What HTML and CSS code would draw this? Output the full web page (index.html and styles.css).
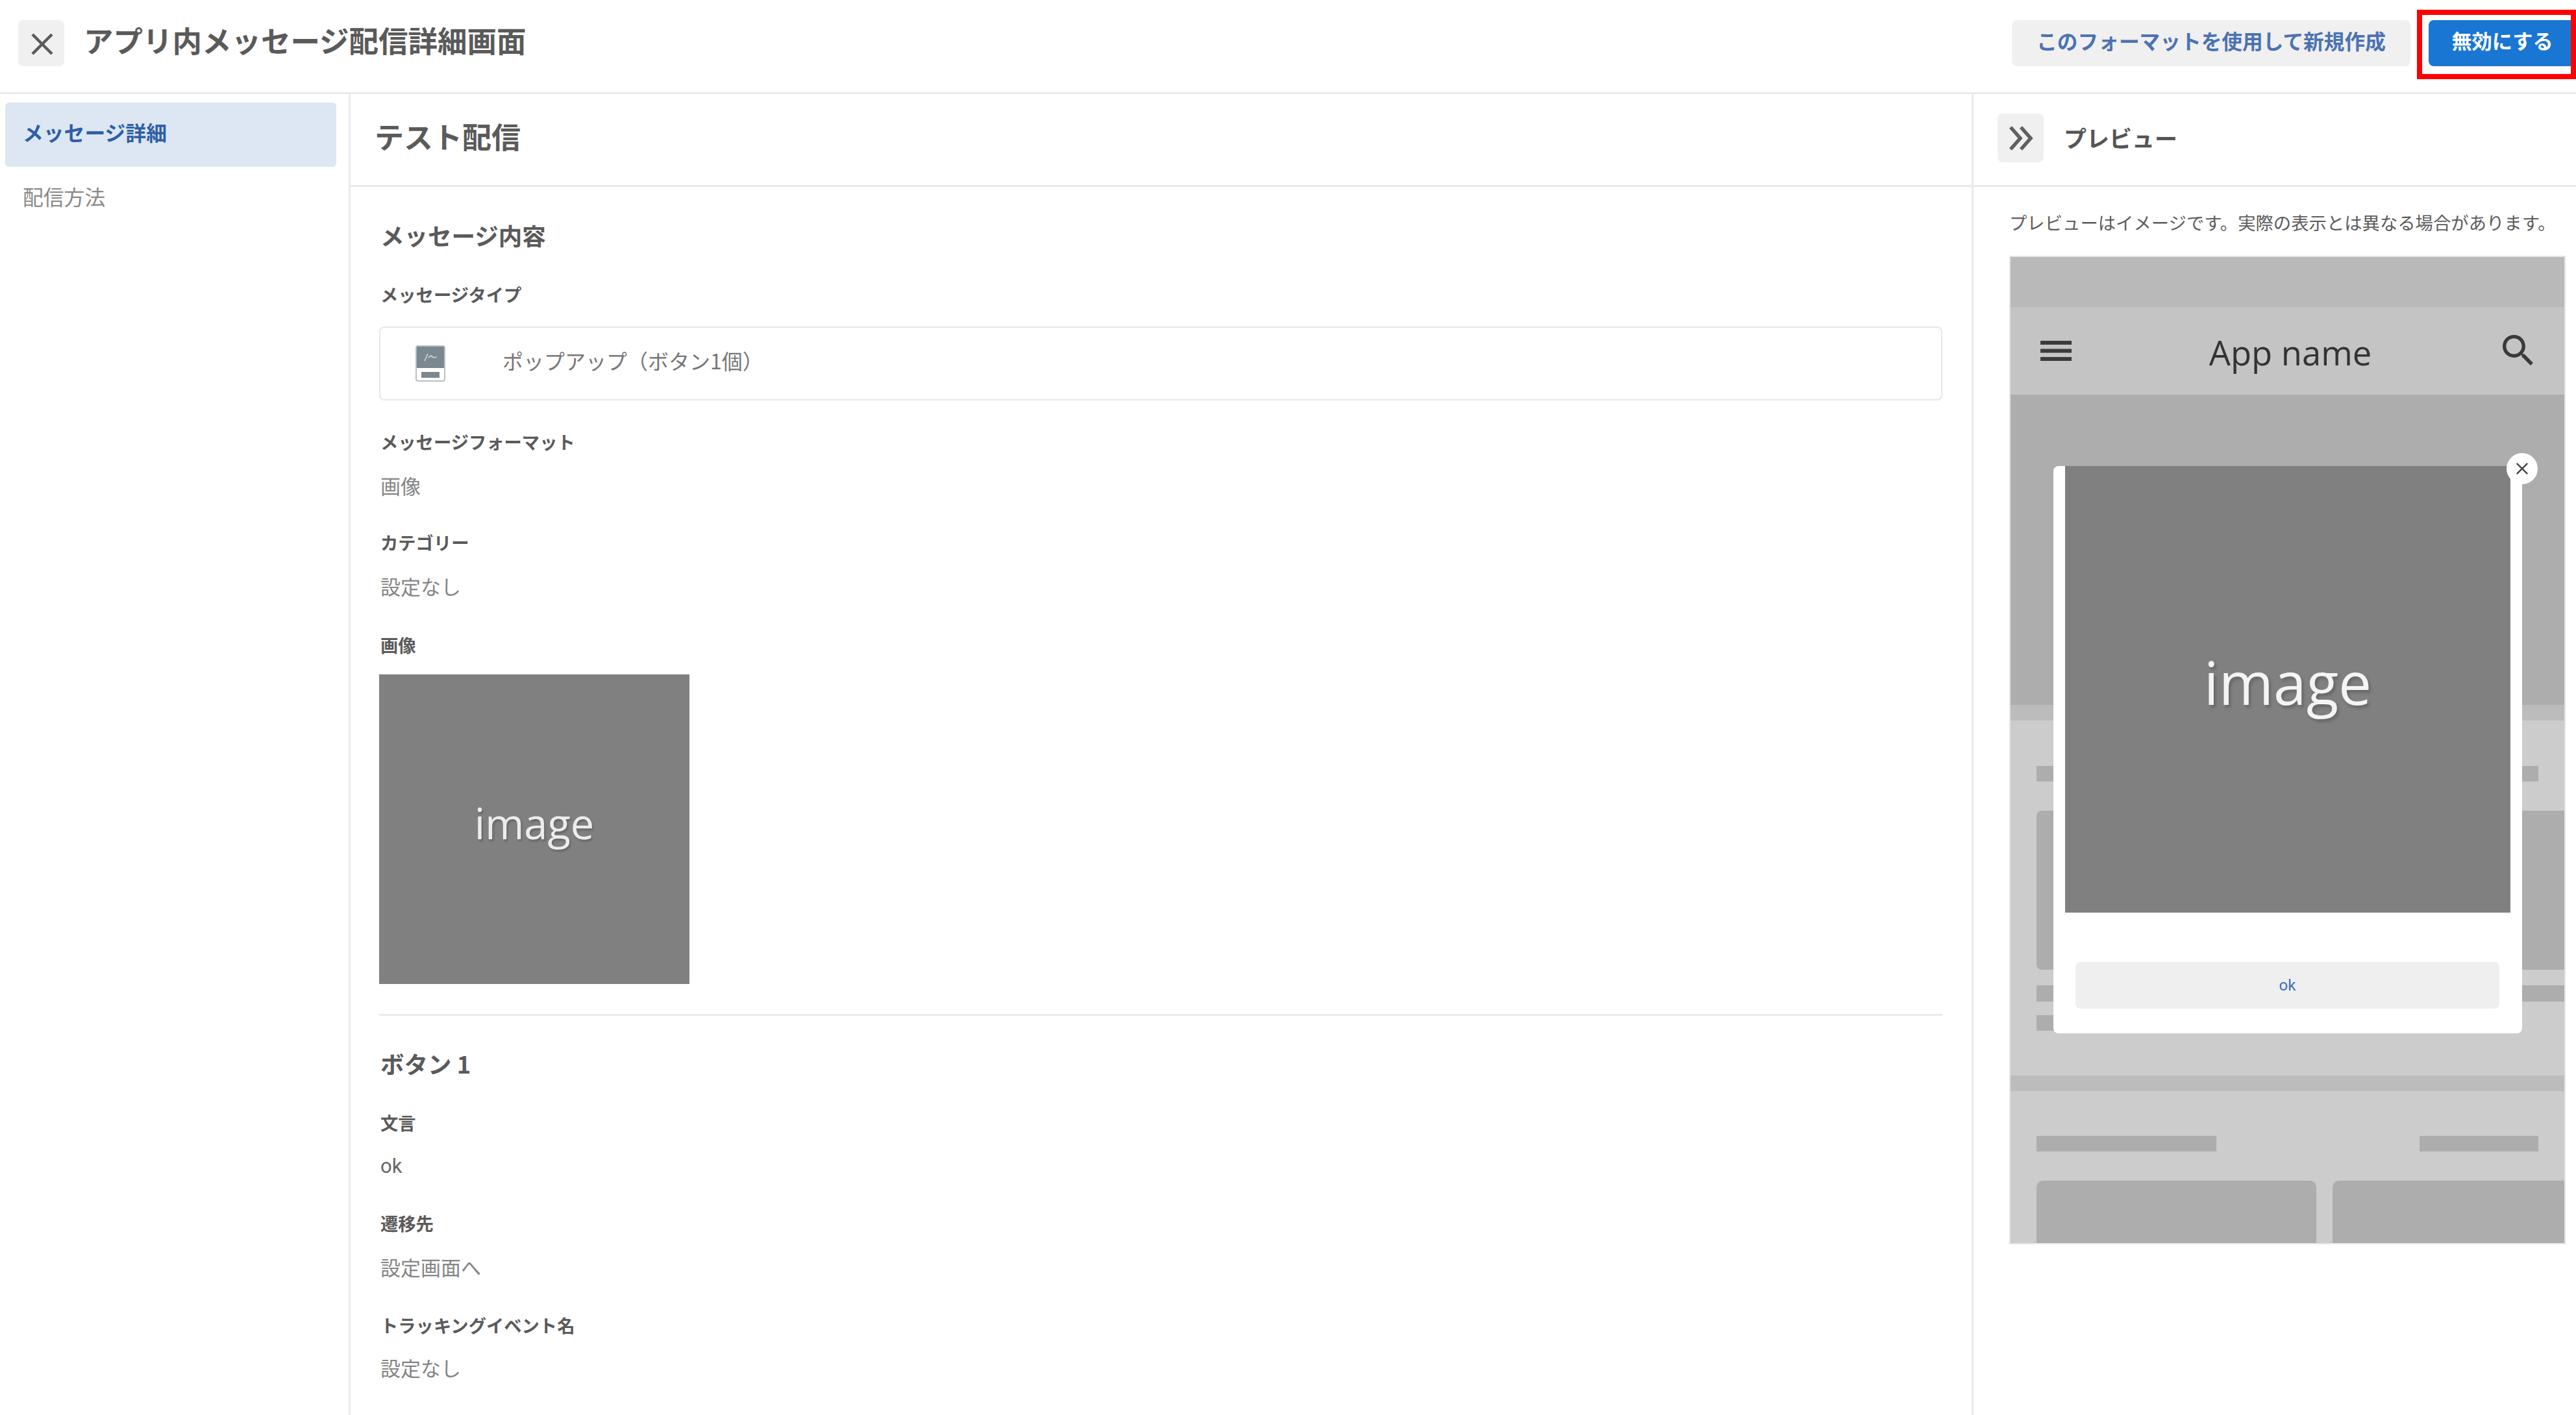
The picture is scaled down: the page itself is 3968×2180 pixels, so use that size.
FILE: index.html
```html
<!DOCTYPE html>
<html lang="ja">
<head>
<meta charset="utf-8">
<title>アプリ内メッセージ配信詳細画面</title>
<link rel="stylesheet" href="styles.css">
</head>
<body>
<div class="app">
  <header class="topbar">
    <button class="icon-btn close-btn" aria-label="閉じる">
      <svg class="close-icon" viewBox="0 0 34 34"><path d="M2 2 32 32M32 2 2 32"/></svg>
    </button>
    <h1 class="page-title">アプリ内メッセージ配信詳細画面</h1>
    <div class="actions">
      <button class="btn btn-secondary">このフォーマットを使用して新規作成</button>
      <button class="btn btn-primary">無効にする</button>
    </div>
    <div class="highlight"></div>
  </header>
  <div class="main">
    <nav class="sidebar">
      <a class="nav-item active">メッセージ詳細</a>
      <a class="nav-item second">配信方法</a>
    </nav>
    <section class="content">
      <div class="sub-head"><h2 class="sub-title">テスト配信</h2></div>
      <div class="detail">
        <h3 class="section-title first">メッセージ内容</h3>
        <div class="field tight">
          <div class="label">メッセージタイプ</div>
          <div class="type-box">
            <svg class="type-icon" viewBox="0 0 46 56">
              <rect x="1" y="1" width="44" height="54" rx="3" fill="#fff" stroke="#b9bfc3" stroke-width="2"/>
              <path d="M2 3a1 1 0 0 1 1-1h40a1 1 0 0 1 1 1v32H2z" fill="#7b888f"/>
              <path d="M14 24 19 13M20 19l4-3 4 3 5-1" fill="none" stroke="#d5dadd" stroke-width="1.6"/>
              <rect x="9" y="41" width="28" height="9" fill="#7b888f"/>
            </svg>
            <span class="type-text">ポップアップ（ボタン1個）</span>
          </div>
        </div>
        <div class="field">
          <div class="label">メッセージフォーマット</div>
          <div class="value">画像</div>
        </div>
        <div class="field">
          <div class="label">カテゴリー</div>
          <div class="value">設定なし</div>
        </div>
        <div class="field image-field">
          <div class="label">画像</div>
          <div class="thumb"><span class="thumb-text">image</span></div>
        </div>
        <hr class="divider">
        <h3 class="section-title">ボタン 1</h3>
        <div class="field">
          <div class="label">文言</div>
          <div class="value latin">ok</div>
        </div>
        <div class="field">
          <div class="label">遷移先</div>
          <div class="value">設定画面へ</div>
        </div>
        <div class="field last">
          <div class="label">トラッキングイベント名</div>
          <div class="value">設定なし</div>
        </div>
      </div>
    </section>
    <aside class="preview">
      <div class="preview-head">
        <button class="icon-btn expand-btn" aria-label="閉じる">
          <svg class="chevrons" viewBox="0 0 38 38"><path d="M3 2 18 19 3 36M19 2 34 19 19 36"/></svg>
        </button>
        <h2 class="preview-title">プレビュー</h2>
      </div>
      <div class="preview-body">
        <p class="notice">プレビューはイメージです。実際の表示とは異なる場合があります。</p>
        <div class="phone">
          <div class="status"></div>
          <div class="appbar">
            <svg class="menu-icon" viewBox="0 0 48 31"><path d="M0 0h48v6H0zM0 12.500h48v6H0zM0 25h48v6H0z"/></svg>
            <span class="app-name">App name</span>
            <svg class="search-icon" viewBox="3 3 17.500 17.500"><path d="M15.500 14h-.79l-.28-.27A6.471 6.471 0 0 0 16 9.500 6.500 6.500 0 1 0 9.500 16c1.610 0 3.090-.59 4.230-1.570l.27.28v.79l5 4.990L20.490 19l-4.990-5zm-6 0C7.010 14 5 11.990 5 9.500S7.010 5 9.500 5 14 7.010 14 9.500 11.990 14 9.500 14z"/></svg>
          </div>
          <div class="hero"></div>
          <div class="band"></div>
          <div class="block block-a">
            <div class="bar-row"><span class="bar w-a"></span><span class="bar w-b"></span></div>
            <div class="wide-card"></div>
            <div class="bar full"></div>
            <div class="bar short"></div>
          </div>
          <div class="band"></div>
          <div class="block block-b">
            <div class="bar-row"><span class="bar w-a"></span><span class="bar w-b"></span></div>
            <div class="cards"><div class="card"></div><div class="card"></div></div>
          </div>
          <div class="popup">
            <div class="popup-image"><span class="popup-image-text">image</span></div>
            <button class="popup-ok">ok</button>
          </div>
          <div class="popup-close">
            <svg class="popup-close-icon" viewBox="0 0 22 22"><path d="M2 2 20 20M20 2 2 20"/></svg>
          </div>
        </div>
      </div>
    </aside>
  </div>
</div>
</body>
</html>
```

FILE: styles.css
```css
* { box-sizing: border-box; }
html, body { margin: 0; padding: 0; background: #fff; }
body { font-family: "Noto Sans CJK JP", "Noto Sans", sans-serif; color: #555; }
h1, h2, h3, p { margin: 0; }

.app { width: 3968px; height: 2180px; display: flex; flex-direction: column; overflow: hidden; }

/* top bar */
.topbar {
  position: relative; flex: none; height: 145px; padding: 0 0 10px 28px;
  display: flex; align-items: center; border-bottom: 3px solid #e9e9ef;
}
.icon-btn { border: 0; background: #f0f0f0; border-radius: 8px; padding: 0; display: flex; align-items: center; justify-content: center; }
.close-btn { width: 71px; height: 71px; }
.close-icon { width: 34px; height: 34px; margin: 4px 0 0 2px; }
.close-icon path { fill: none; stroke: #5a5a5a; stroke-width: 4.5; }
.page-title { margin: -10px 0 0 30px; font-size: 45.500px; font-weight: 700; line-height: 60px; color: #5a5a5a; white-space: nowrap; }
.actions { margin-left: auto; display: flex; gap: 28px; }
.btn { height: 71px; border: 0; border-radius: 8px; font-family: inherit; font-weight: 700; font-size: 31.700px; line-height: 40px; padding: 0 0 8px; white-space: nowrap; }
.btn-secondary { width: 614px; background: #f0f0f0; color: #4c72b3; }
.btn-primary { width: 227px; background: #1976d2; color: #fff; border-radius: 8px 0 0 8px; font-size: 31.200px; }
.highlight { position: absolute; left: 3723px; top: 15px; width: 245px; height: 107px; border: 8px solid #f00; }

/* main columns */
.main { flex: 1; min-height: 0; display: flex; }
.sidebar { flex: none; width: 540px; border-right: 3px solid #e9e9ef; padding: 13px 19px 0 8px; }
.nav-item { display: flex; align-items: center; height: 99px; padding-left: 27px; border-radius: 6px; font-size: 31.800px; color: #888; }
.nav-item.active { background: #dce7f3; color: #2e5fa6; font-weight: 700; padding-bottom: 10px; }
.nav-item.second { height: 98px; padding-bottom: 8px; }

.content { flex: none; width: 2500px; border-right: 3px solid #e9e9ef; display: flex; flex-direction: column; }
.sub-head { flex: none; height: 143px; padding: 0 0 10px 37px; display: flex; align-items: center; border-bottom: 3px solid #e9e9ef; }
.sub-title { font-size: 45px; font-weight: 700; line-height: 60px; color: #5a5a5a; }
.detail { padding: 0 45px 0 44px; }

.section-title { font-size: 36.500px; font-weight: 700; line-height: 50px; color: #5a5a5a; margin-top: 49px; padding-left: 2px; }
.section-title.first { margin-top: 50px; }
.field { margin-top: 45px; padding-left: 2px; }
.field.tight { margin-top: 45px; }
.label { font-size: 27.300px; font-weight: 700; line-height: 40px; color: #5a5a5a; white-space: nowrap; }
.value { margin-top: 26px; font-size: 31px; line-height: 44px; color: #858585; }
.value.latin { color: #666; font-family: "Roboto", sans-serif; }
.field.last { margin-top: 47px; }
.field.last .value { margin-top: 24px; }

.type-box { margin: 30px 0 -2px -2px; height: 114px; border: 2px solid #e6e6ec; border-radius: 8px; padding-left: 54px; display: flex; align-items: center; gap: 88px; }
.type-icon { width: 46px; height: 56px; flex: none; }
.type-text { font-size: 32px; line-height: 44px; color: #777; padding-bottom: 10px; }

.image-field { margin-top: 48px; }
.thumb { margin: 26px 0 0 -2px; width: 478px; height: 477px; background: #808080; display: flex; align-items: center; justify-content: center; }
.thumb-text { font-family: "Open Sans", sans-serif; font-size: 65px; line-height: 80px; color: #ececec; text-shadow: 2px 3px 3px #666; margin-bottom: 20px; }
.divider { margin: 46px 0 0; height: 3px; border: 0; background: #e9e9ef; }

/* preview panel */
.preview { flex: 1; min-width: 0; display: flex; flex-direction: column; }
.preview-head { flex: none; height: 143px; padding-left: 37px; display: flex; align-items: flex-start; border-bottom: 3px solid #e9e9ef; }
.expand-btn { width: 71px; height: 75px; margin-top: 30px; flex: none; }
.chevrons { width: 38px; height: 38px; }
.chevrons path { fill: none; stroke: #5f5f5f; stroke-width: 5.500; }
.preview-title { margin: 42px 0 0 31px; font-size: 35px; font-weight: 700; line-height: 50px; color: #555; }
.preview-body { padding: 34px 15px 0 55px; }
.notice { font-size: 27.350px; line-height: 40px; color: #5c5c5c; white-space: nowrap; }

.phone { position: relative; margin-top: 32px; width: 857px; height: 1523px; border: 2px solid #e4e4e4; overflow: hidden; background: #ccc; }
.status { height: 77px; background: #b9b9b9; }
.appbar { position: relative; height: 135px; background: #c4c4c4; display: flex; align-items: center; padding: 0 48px 0 46px; justify-content: space-between; }
.menu-icon { width: 48px; height: 31px; margin-top: 0; }
.menu-icon path { fill: #3a3a3a; }
.app-name { font-family: "Open Sans", sans-serif; font-size: 52.500px; line-height: 70px; color: #333; margin: 4px 0 0 10px; }
.search-icon { width: 47px; height: 47px; margin-top: -3px; }
.search-icon path { fill: #3a3a3a; }
.hero { height: 478px; background: #adadad; }
.band { height: 24px; background: #bcbcbc; }
.block { background: #ccc; padding-left: 40px; }
.block-a { height: 547px; padding-top: 70px; }
.block-b { height: 240px; padding-top: 69px; }
.bar { display: block; height: 24px; background: #adadad; }
.bar-row { display: flex; justify-content: space-between; padding-right: 40px; }
.w-a { width: 277px; }
.w-b { width: 183px; }
.wide-card { margin-top: 45px; height: 245px; background: #adadad; border-radius: 8px 0 0 8px; }
.bar.full { margin-top: 24px; height: 25px; }
.bar.short { margin-top: 21px; width: 200px; }
.cards { margin-top: 45px; display: flex; gap: 25px; }
.card { flex: none; width: 431px; height: 120px; background: #adadad; border-radius: 10px 10px 0 0; }

.popup { position: absolute; left: 66px; top: 322px; width: 722px; height: 874px; background: #fff; border-radius: 8px; padding: 0 18px; }
.popup-image { height: 688px; background: #808080; display: flex; align-items: center; justify-content: center; }
.popup-image-text { font-family: "Open Sans", sans-serif; font-size: 91px; line-height: 110px; color: #f4f4f4; text-shadow: 3px 4px 4px #666; margin-bottom: 22px; }
.popup-ok { display: block; margin: 76px 0 0 16px; width: 653px; height: 72px; border: 0; border-radius: 8px; background: #efefef; color: #3d6fc6; font-family: "Roboto", sans-serif; font-size: 24px; padding: 0; }
.popup-close { position: absolute; left: 764px; top: 302px; width: 48px; height: 48px; border-radius: 50%; background: #fff; display: flex; align-items: center; justify-content: center; }
.popup-close-icon { width: 20px; height: 20px; }
.popup-close-icon path { fill: none; stroke: #444; stroke-width: 2.600; }
```
